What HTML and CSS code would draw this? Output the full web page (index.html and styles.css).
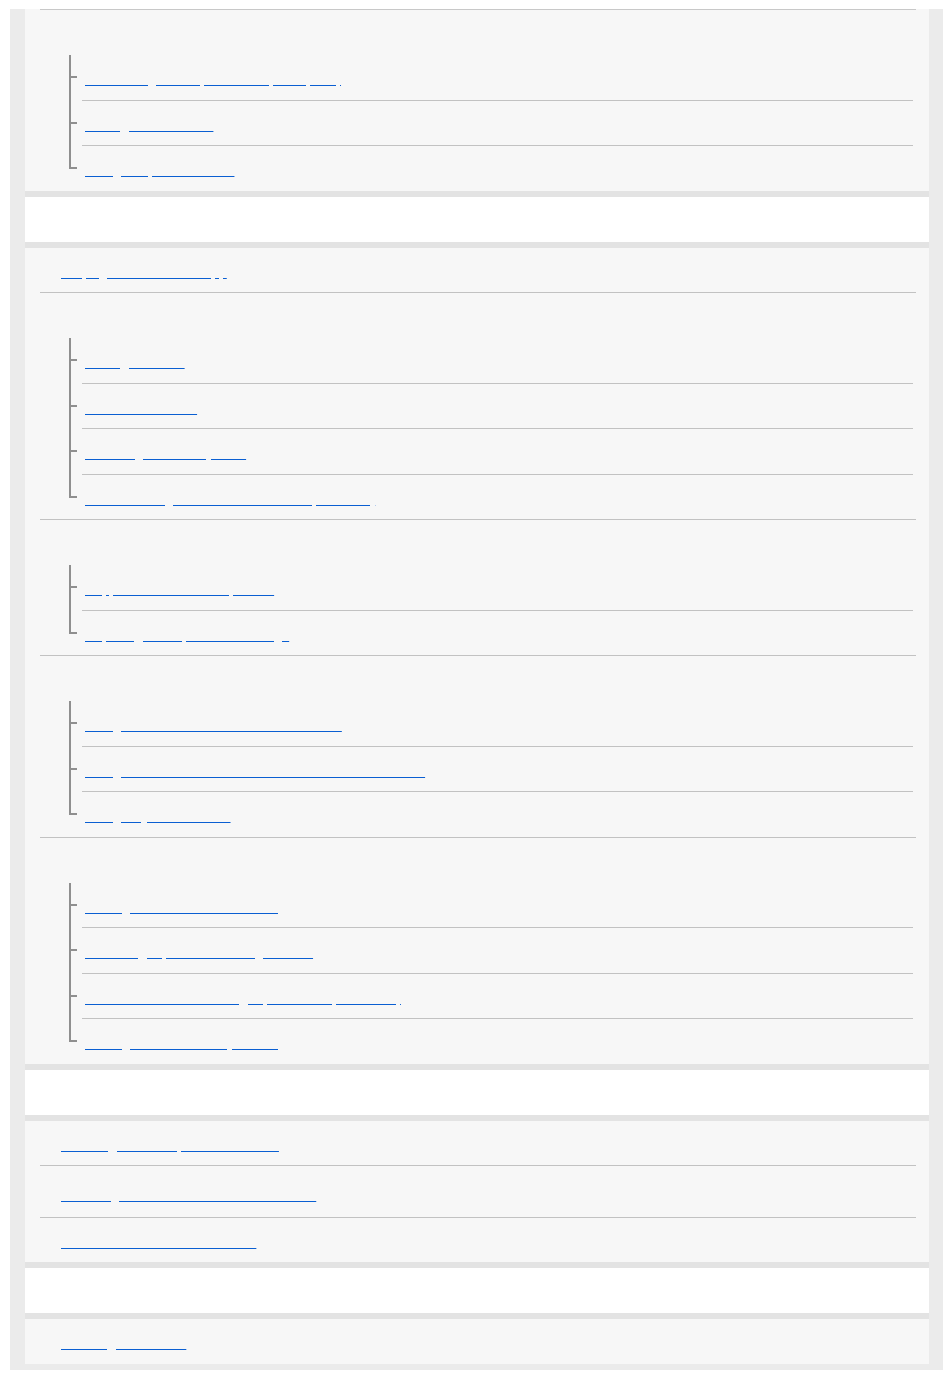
FILE: index.html
```html
<!DOCTYPE html>
<html lang="en">

<head>
    <meta charset="UTF-8">
    <meta name="viewport" content="width=device-width, initial-scale=1.0">
    <title>Help Guide - Contents</title>
    <link rel="stylesheet" href="styles.css">
</head>

<body>
    <div class="guide">

        <!-- continued from the previous section -->
        <div class="toc-panel">
            <ul class="toc-list">
                <li class="toc-item is-cont">
                    <span class="toc-label">Connecting to a computer</span>
                    <ul class="toc-sub">
                        <li><a class="toc-link" href="#">Connecting with a paired computer (Mac)</a></li>
                        <li><a class="toc-link" href="#">Pairing with a device</a></li>
                        <li><a class="toc-link" href="#">Using the paired iPhone</a></li>
                    </ul>
                </li>
            </ul>
        </div>

        <h2 class="toc-break">Listening to music</h2>

        <div class="toc-panel">
            <ul class="toc-list">
                <li class="toc-item"><a class="toc-link" href="#">Playing music with the app</a></li>
                <li class="toc-item">
                    <span class="toc-label">Bluetooth connection</span>
                    <ul class="toc-sub">
                        <li><a class="toc-link" href="#">Pairing a device</a></li>
                        <li><a class="toc-link" href="#">Connection status</a></li>
                        <li><a class="toc-link" href="#">Checking the battery level</a></li>
                        <li><a class="toc-link" href="#">Disconnecting Bluetooth connection (after use)</a></li>
                    </ul>
                </li>
                <li class="toc-item">
                    <span class="toc-label">Sound quality</span>
                    <ul class="toc-sub">
                        <li><a class="toc-link" href="#">Supported codecs and profiles</a></li>
                        <li><a class="toc-link" href="#">Adjusting the equalizer’s settings</a></li>
                    </ul>
                </li>
                <li class="toc-item">
                    <span class="toc-label">Noise canceling function</span>
                    <ul class="toc-sub">
                        <li><a class="toc-link" href="#">Using the Ambient Sound Mode functions</a></li>
                        <li><a class="toc-link" href="#">Using the Ambient Sound Mode with the touch controls</a></li>
                        <li><a class="toc-link" href="#">Using a Quick Attention</a></li>
                    </ul>
                </li>
                <li class="toc-item">
                    <span class="toc-label">Making phone calls</span>
                    <ul class="toc-sub">
                        <li><a class="toc-link" href="#">Making a call from this headset</a></li>
                        <li><a class="toc-link" href="#">Receiving a phone call using the unit</a></li>
                        <li><a class="toc-link" href="#">Functions available during a phone call (HFP/HSP)</a></li>
                        <li><a class="toc-link" href="#">Making a video call on your PC</a></li>
                    </ul>
                </li>
            </ul>
        </div>

        <h2 class="toc-break">Using the app</h2>

        <div class="toc-panel">
            <ul class="toc-list">
                <li class="toc-item"><a class="toc-link" href="#">Installing the Headphones Connect</a></li>
                <li class="toc-item"><a class="toc-link is-tall" href="#">Checking the software version of this unit</a></li>
                <li class="toc-item"><a class="toc-link" href="#">Notes on the Bluetooth function</a></li>
            </ul>
        </div>

        <h2 class="toc-break">Troubleshooting</h2>

        <div class="toc-panel">
            <ul class="toc-list">
                <li class="toc-item"><a class="toc-link" href="#">Learning the basics.</a></li>
            </ul>
        </div>

    </div>
</body>

</html>
```

FILE: styles.css
```css
body {
    font-family: "Liberation Sans", Arial, sans-serif;
    font-size: 14px;
    margin: 0;
    padding: 0;
    background-color: #fff;
}

.guide {
    width: 933px;
    margin: 9px 0 0 10px;
    padding: 0 14px 6px 15px;
    box-sizing: border-box;
    background-color: #ebebeb;
}

.toc-panel {
    background-color: #f7f7f7;
    padding: 0 13px 0 15px;
}

.toc-list,
.toc-sub {
    list-style: none;
    margin: 0;
    padding: 0;
}

.toc-item {
    border-bottom: 1px solid #c2c2c2;
}

.toc-item:last-child {
    border-bottom: none;
}

.toc-item.is-cont {
    border-top: 1px solid #c8c8c8;
}

/* link text is not drawn, only the underline shows */
.toc-link {
    display: block;
    padding: 14px 0 10px 21px;
    line-height: 20.5px;
    color: transparent;
    text-decoration: underline;
    text-decoration-color: #0a5fd2;
}

.toc-link.is-tall {
    padding-top: 19px;
    padding-bottom: 11px;
}

.toc-label {
    display: block;
    height: 45px;
    padding-left: 21px;
    line-height: 45px;
    color: transparent;
}

.toc-sub {
    margin: 0 3px 0 42px;
}

.toc-sub li {
    position: relative;
    border-bottom: 1px solid #c2c2c2;
}

.toc-sub li:last-child {
    border-bottom: none;
}

.toc-sub .toc-link {
    padding-left: 3px;
}

/* tree lines */
.toc-sub li::before {
    content: "";
    position: absolute;
    left: -13px;
    top: 0;
    bottom: -1px;
    border-left: 2px solid #8f8f8f;
}

.toc-sub li:last-child::before {
    bottom: 50%;
}

.toc-sub li::after {
    content: "";
    position: absolute;
    left: -13px;
    top: 50%;
    width: 8px;
    margin-top: -1px;
    border-top: 2px solid #8f8f8f;
}

.toc-break {
    height: 45px;
    margin: 0;
    background-color: #fff;
    border-top: 6px solid #e3e3e3;
    border-bottom: 6px solid #e3e3e3;
    font-size: 14px;
    color: transparent;
}
```
